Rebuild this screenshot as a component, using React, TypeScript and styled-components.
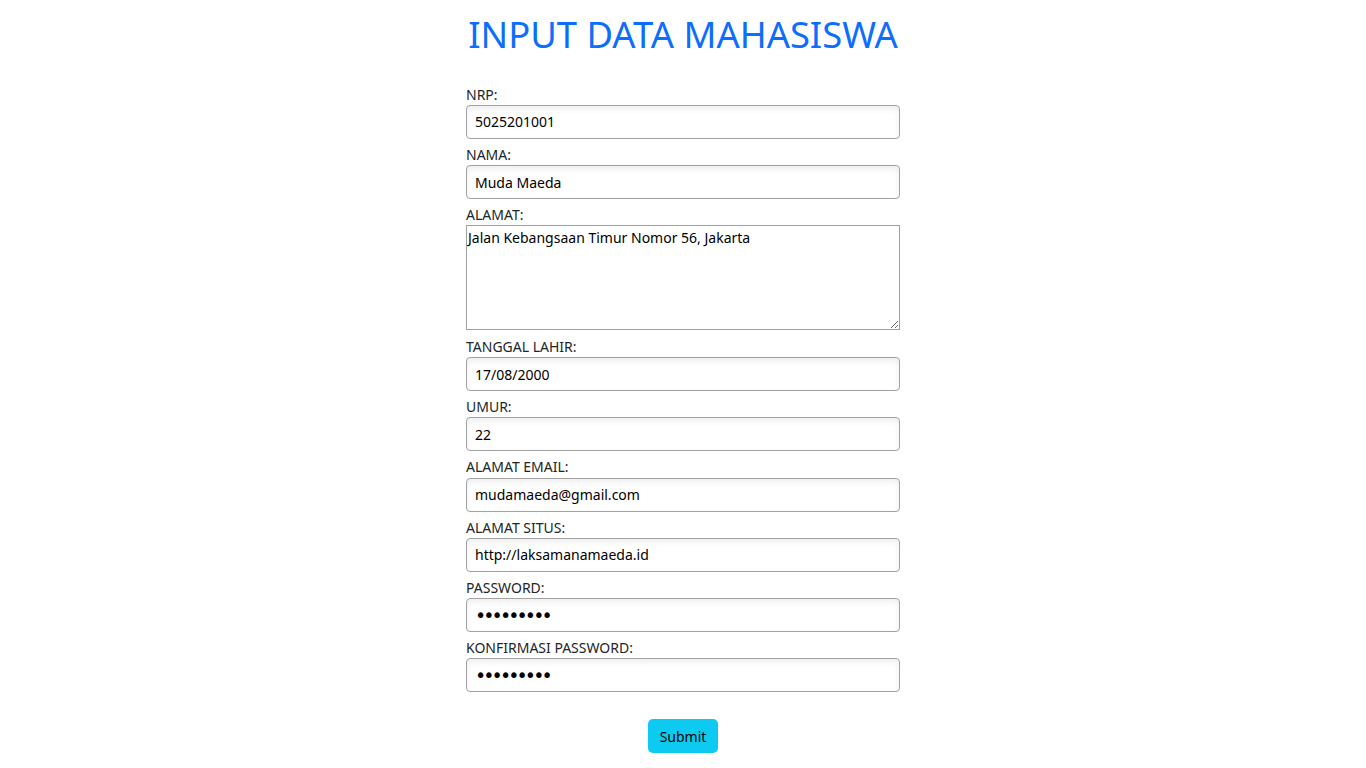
import React from "react";
import styled, { createGlobalStyle } from "styled-components";

const GlobalStyle = createGlobalStyle`
  body {
    margin: 0;
    background: #ffffff;
    font-family: "Noto Sans", "Open Sans", sans-serif;
    color: #212529;
  }
`;

const Page = styled.div`
  display: flex;
  flex-direction: column;
  align-items: center;
  padding-top: 9.6px;
`;

const Title = styled.h1`
  margin: 0 0 26px;
  font-size: 36.4px;
  line-height: 49px;
  font-weight: 400;
  color: #0d6efd;
`;

const Form = styled.form`
  width: 434px;
  display: flex;
  flex-direction: column;
`;

const Field = styled.div<{ $gap?: number }>`
  display: flex;
  flex-direction: column;
  margin-bottom: ${(p) => p.$gap ?? 6}px;
`;

const Label = styled.label`
  font-size: 14px;
  line-height: 20.25px;
  color: #212529;
`;

const Input = styled.input<{ $masked?: boolean }>`
  box-sizing: border-box;
  width: 100%;
  height: 34px;
  margin: 0;
  padding: 0 8px;
  border: 1px solid #a2a2a2;
  border-radius: 4px;
  background: #ffffff;
  box-shadow: inset 0 3px 6px rgba(0, 0, 0, 0.07);
  font-family: ${(p) =>
    p.$masked ? `"DejaVu Sans", sans-serif` : `"Noto Sans", "Open Sans", sans-serif`};
  font-size: ${(p) => (p.$masked ? 19 : 14)}px;
  letter-spacing: ${(p) => (p.$masked ? -2.9 : 0)}px;
  color: #000000;
  outline: none;
`;

const TextArea = styled.textarea`
  display: block;
  box-sizing: border-box;
  width: 100%;
  height: 105px;
  margin: 0;
  padding: 2px 1px;
  border: 1px solid #a0a0a0;
  border-radius: 0;
  background: #ffffff;
  font-family: "Noto Sans", "Open Sans", sans-serif;
  font-size: 14px;
  line-height: 19px;
  color: #000000;
  outline: none;
`;

const Actions = styled.div`
  display: flex;
  justify-content: center;
  margin-top: 21px;
`;

const SubmitButton = styled.button`
  height: 34px;
  padding: 0 12px;
  border: none;
  border-radius: 5px;
  background: #0dcaf0;
  color: #000000;
  font-family: "Noto Sans", "Open Sans", sans-serif;
  font-size: 14px;
  cursor: pointer;
`;

type FieldDef = {
  id: string;
  label: string;
  value: string;
  type?: string;
  multiline?: boolean;
};

const fields: FieldDef[] = [
  { id: "nrp", label: "NRP:", value: "5025201001" },
  { id: "nama", label: "NAMA:", value: "Muda Maeda" },
  {
    id: "alamat",
    label: "ALAMAT:",
    value: "Jalan Kebangsaan Timur Nomor 56, Jakarta",
    multiline: true,
  },
  { id: "lahir", label: "TANGGAL LAHIR:", value: "17/08/2000" },
  { id: "umur", label: "UMUR:", value: "22" },
  { id: "email", label: "ALAMAT EMAIL:", value: "mudamaeda@gmail.com" },
  { id: "situs", label: "ALAMAT SITUS:", value: "http://laksamanamaeda.id" },
  { id: "password", label: "PASSWORD:", value: "123456789", type: "password" },
  {
    id: "konfirmasi",
    label: "KONFIRMASI PASSWORD:",
    value: "123456789",
    type: "password",
  },
];

const App = () => {
  return (
    <Page>
      <GlobalStyle />
      <Title>INPUT DATA MAHASISWA</Title>
      <Form onSubmit={(e) => e.preventDefault()}>
        {fields.map((f) => (
          <Field key={f.id} $gap={f.multiline ? 6.65 : 6}>
            <Label htmlFor={f.id}>{f.label}</Label>
            {f.multiline ? (
              <TextArea id={f.id} defaultValue={f.value} />
            ) : (
              <Input
                id={f.id}
                type={f.type ?? "text"}
                $masked={f.type === "password"}
                defaultValue={f.value}
              />
            )}
          </Field>
        ))}
        <Actions>
          <SubmitButton type="submit">Submit</SubmitButton>
        </Actions>
      </Form>
    </Page>
  );
};

export default App;
